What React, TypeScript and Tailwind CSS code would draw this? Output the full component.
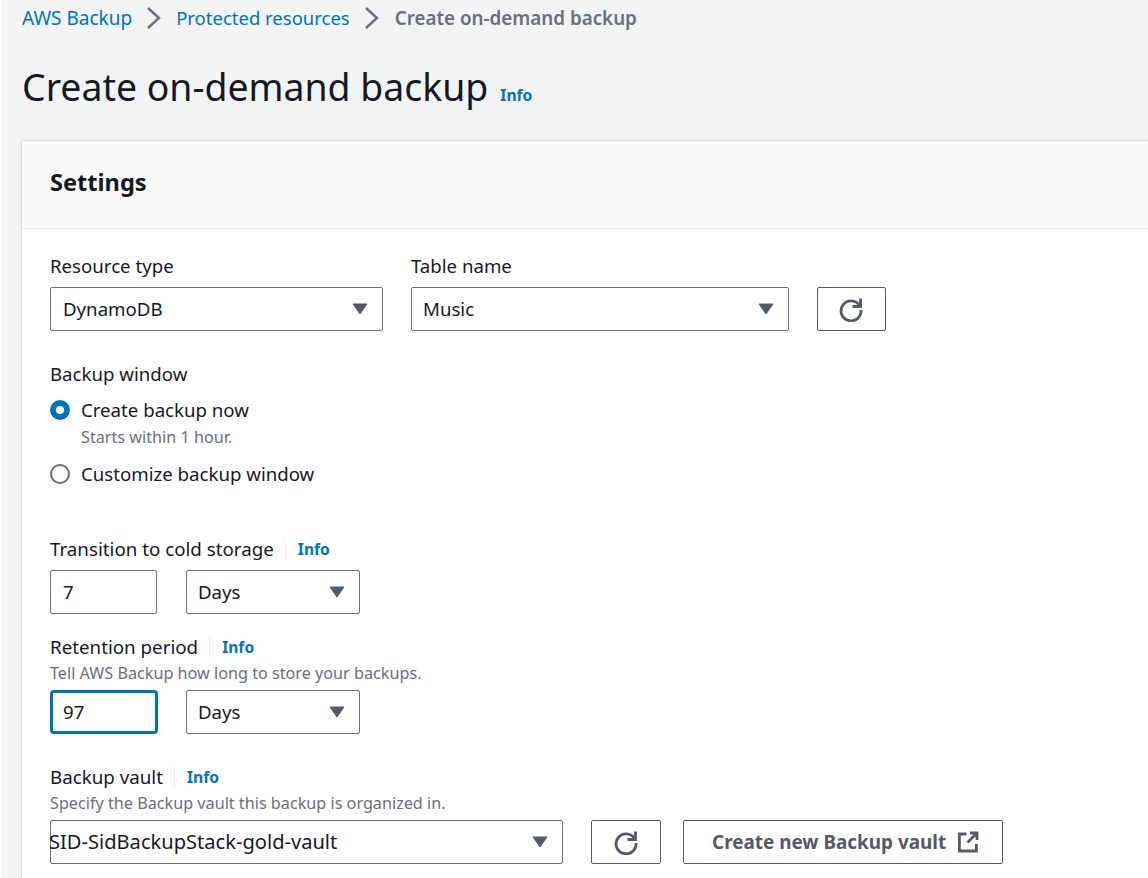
import React from "react";

const Tri = () => (
  <svg width="16" height="12" viewBox="0 0 16 12" className="shrink-0">
    <path d="M1 1h14L8 11z" fill="#545b64" stroke="#545b64" strokeWidth="1" strokeLinejoin="round" />
  </svg>
);

const Select = ({ value, className }: { value: string; className: string }) => (
  <div className={`h-[44px] flex items-center justify-between border border-[#687078] rounded-[2px] bg-white pr-[14px] text-[#16191f] ${className}`}>
    <span>{value}</span>
    <Tri />
  </div>
);

const Refresh = ({ className }: { className: string }) => (
  <div className={`h-[44px] flex items-center justify-center border border-[#545b64] rounded-[2px] bg-white ${className}`}>
    <svg width="26" height="26" viewBox="0 0 26 26" fill="none" stroke="#545b64" strokeWidth="2.8" className="-ml-[1px]">
      <path d="M21.5 9.5A10 10 0 1 0 23 14" />
      <path d="M22.5 2.5v8h-8" strokeLinejoin="miter" />
    </svg>
  </div>
);

const Info = ({ className = "" }: { className?: string }) => (
  <span className={`text-[#0073bb] font-bold text-[15.6px] ${className}`}>Info</span>
);

const InfoLabel = ({ label }: { label: string }) => (
  <div className="flex items-center h-[24px] text-[18.75px] text-[#16191f]">
    <span>{label}</span>
    <span className="w-px h-[20px] bg-[#eaeded] ml-[11px] mr-[12px]" />
    <Info className="pt-[2px]" />
  </div>
);

const Chevron = () => (
  <svg width="16" height="26" viewBox="0 0 16 26" fill="none" stroke="#687078" strokeWidth="2.4" className="mx-[14px] shrink-0">
    <path d="M2 3l11 10L2 23" />
  </svg>
);

const Radio = ({ checked }: { checked?: boolean }) =>
  checked ? (
    <span className="w-[20px] h-[20px] rounded-full border-[6px] border-[#0073bb] bg-white shrink-0" />
  ) : (
    <span className="w-[20px] h-[20px] rounded-full border-2 border-[#687078] bg-white shrink-0" />
  );

export default function App() {
  return (
    <div
      className="h-[878px] w-[1148px] overflow-hidden bg-[#f2f3f3] border-l-2 border-white pl-[20px]"
      style={{ fontFamily: '"Noto Sans", "Open Sans", sans-serif' }}
    >
      <nav className="flex items-center h-[36px]">
        <span className="text-[#0073bb] text-[19px]">AWS Backup</span>
        <Chevron />
        <span className="text-[#0073bb] text-[18.5px]">Protected resources</span>
        <Chevron />
        <span className="text-[#687078] font-semibold text-[18.8px] ml-px">Create on-demand backup</span>
      </nav>

      <div className="flex items-baseline mt-[22px] h-[60px]">
        <h1 className="text-[37.4px] leading-[58px] text-[#16191f] font-normal">Create on-demand backup</h1>
        <Info className="ml-[12px]" />
      </div>

      <section className="mt-[23px] min-h-[800px] bg-white shadow-[0_0_2px_rgba(0,28,36,0.3)]">
        <header className="h-[88px] bg-[#fafafa] border-b border-[#eaeded] pl-[28px] pb-[4px] flex items-center">
          <h2 className="text-[23.6px] font-bold text-[#16191f]">Settings</h2>
        </header>

        <div className="pl-[28px] pt-[25px] text-[18.65px]">
          <div className="flex items-end">
            <div className="w-[333px]">
              <div className="h-[24px] text-[#16191f] mb-[9px] leading-[24px]">Resource type</div>
              <Select value="DynamoDB" className="w-full pl-[12px]" />
            </div>
            <div className="w-[378px] ml-[28px]">
              <div className="h-[24px] text-[#16191f] mb-[9px] leading-[24px]">Table name</div>
              <Select value="Music" className="w-full pl-[11px]" />
            </div>
            <div className="ml-[28px]">
              <Refresh className="w-[69px]" />
            </div>
          </div>

          <div className="mt-[31px] h-[24px] leading-[24px] text-[#16191f]">Backup window</div>
          <div className="mt-[12px] flex items-center gap-[11px] h-[24px] text-[#16191f]">
            <Radio checked />
            <span>Create backup now</span>
          </div>
          <div className="ml-[31px] mt-[3px] h-[24px] leading-[24px] text-[16.2px] text-[#687078]">Starts within 1 hour.</div>
          <div className="mt-[13px] flex items-center gap-[11px] h-[24px] text-[#16191f]">
            <Radio />
            <span>Customize backup window</span>
          </div>

          <div className="mt-[51px]">
            <InfoLabel label="Transition to cold storage" />
          </div>
          <div className="mt-[9px] flex">
            <div className="w-[107px] h-[44px] flex items-center border border-[#687078] rounded-[2px] pl-[12px] text-[#16191f]">7</div>
            <Select value="Days" className="w-[174px] ml-[29px] pl-[11px]" />
          </div>

          <div className="mt-[21px]">
            <InfoLabel label="Retention period" />
          </div>
          <div className="mt-[2px] h-[24px] leading-[24px] text-[16.2px] text-[#687078]">Tell AWS Backup how long to store your backups.</div>
          <div className="mt-[5px] flex">
            <div className="w-[108px] h-[44px] flex items-center border-[3px] border-[#0073bb] rounded-[4px] pl-[10px] text-[#16191f]">97</div>
            <Select value="Days" className="w-[174px] ml-[28px] pl-[11px]" />
          </div>

          <div className="mt-[31px]">
            <InfoLabel label="Backup vault" />
          </div>
          <div className="mt-[2px] h-[24px] leading-[24px] text-[16.2px] text-[#687078]">Specify the Backup vault this backup is organized in.</div>
          <div className="mt-[5px] flex">
            <Select value="SID-SidBackupStack-gold-vault" className="w-[513px] text-[20.1px] pl-0 [&>span]:-ml-[2px]" />
            <Refresh className="w-[70px] ml-[28px]" />
            <div className="w-[320px] ml-[22px] h-[44px] flex items-center gap-[12px] border border-[#545b64] rounded-[2px] pl-[28px] text-[18.9px] font-bold text-[#545b64]">
              <span>Create new Backup vault</span>
              <svg width="22" height="22" viewBox="0 0 22 22" fill="none" stroke="#545b64" strokeWidth="2.8">
                <path d="M8.5 3H1.4v17h17v-7" />
                <path d="M12 2h7v7M19 2L9.5 11.5" />
              </svg>
            </div>
          </div>
        </div>
      </section>
    </div>
  );
}
